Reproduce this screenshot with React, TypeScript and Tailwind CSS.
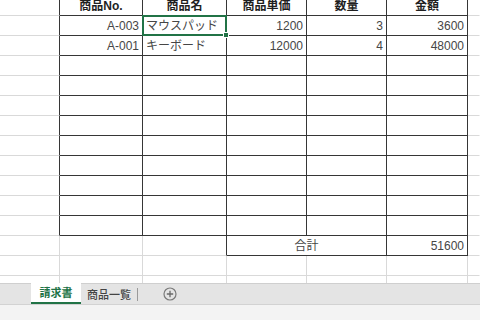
import React from "react";

type Edge = "d" | "l" | "n";

const rightEdge: Record<Edge, string> = {
  d: "border-r border-r-[#363636]",
  l: "border-r border-r-[#d9d9d9]",
  n: "border-r border-r-transparent",
};
const bottomEdge: Record<Edge, string> = {
  d: "border-b border-b-[#363636]",
  l: "border-b border-b-[#d9d9d9]",
  n: "border-b border-b-transparent",
};

type CellDef = {
  w: number;
  r: Edge;
  b: Edge;
  text?: string;
  align?: "left" | "right" | "center";
  head?: boolean;
  selected?: boolean;
};

// column widths incl. right border: row header gap, 5 table columns, right edge
const W = [60, 83, 84, 80, 80, 81, 12];

const Cell = ({ w, r, b, text, align = "left", head, selected }: CellDef) => {
  const alignCls =
    align === "right" ? "justify-end" : align === "center" ? "justify-center" : "justify-start";
  return (
    <div
      style={{ width: w }}
      className={`relative box-border h-[20px] shrink-0 flex items-center px-[3px] whitespace-nowrap ${rightEdge[r]} ${bottomEdge[b]} ${alignCls} ${
        head ? "font-bold text-[#1f1f1f]" : "text-[#464646]"
      }`}
    >
      {text}
      {selected && (
        <div className="absolute -left-px -top-px -right-px -bottom-px border-2 border-[#217346] z-10">
          <div className="absolute -right-[4px] -bottom-[4px] w-[6px] h-[6px] bg-[#217346] border border-white" />
        </div>
      )}
    </div>
  );
};

const tableRow = (cells: (Partial<CellDef> | undefined)[], bottom: Edge = "d"): CellDef[] => [
  { w: W[0], r: "d", b: "l" },
  ...[1, 2, 3, 4, 5].map((i) => ({ w: W[i], r: "d" as Edge, b: bottom, ...(cells[i - 1] || {}) })),
  { w: W[6], r: "n", b: "l" },
];

const gridRow = (): CellDef[] => W.map((w, i) => ({ w, r: (i === 6 ? "n" : "l") as Edge, b: "l" as Edge }));

const rows: CellDef[][] = [
  tableRow([
    { text: "商品No.", align: "center", head: true },
    { text: "商品名", align: "center", head: true },
    { text: "商品単価", align: "center", head: true },
    { text: "数量", align: "center", head: true },
    { text: "金額", align: "center", head: true },
  ]),
  tableRow([
    { text: "A-003", align: "right" },
    { text: "マウスパッド", selected: true },
    { text: "1200", align: "right" },
    { text: "3", align: "right" },
    { text: "3600", align: "right" },
  ]),
  tableRow([
    { text: "A-001", align: "right" },
    { text: "キーボード" },
    { text: "12000", align: "right" },
    { text: "4", align: "right" },
    { text: "48000", align: "right" },
  ]),
  ...Array.from({ length: 9 }, () => tableRow([])),
  [
    { w: W[0], r: "l", b: "l" },
    { w: W[1], r: "l", b: "l" },
    { w: W[2], r: "d", b: "l" },
    { w: W[3] + W[4], r: "d", b: "d", text: "合計", align: "center" },
    { w: W[5], r: "d", b: "d", text: "51600", align: "right" },
    { w: W[6], r: "n", b: "l" },
  ],
  gridRow(),
  gridRow(),
];

export default function App() {
  return (
    <div className="w-[480px] h-[320px] overflow-hidden flex flex-col bg-white text-[12px] font-['Liberation_Sans','Noto_Sans_CJK_JP',sans-serif]">
      {/* sheet */}
      <div className="h-[283px] shrink-0 overflow-hidden">
        <div className="-mt-[4px] flex flex-col">
          {rows.map((row, ri) => (
            <div key={ri} className="flex">
              {row.map((c, ci) => (
                <Cell key={ci} {...c} />
              ))}
            </div>
          ))}
        </div>
      </div>

      {/* sheet tabs */}
      <div className="h-[22px] shrink-0 flex items-stretch bg-[#e4e4e4] border-t border-[#cfcfcf] border-b border-b-[#d2d2d2] pl-[31px] text-[11px] font-['Noto_Sans_CJK_JP',sans-serif]">
        <div className="w-[50px] bg-white flex items-center justify-center border-b-2 border-[#217346] font-bold text-[#217346] -mt-px">
          請求書
        </div>
        <div className="w-[56px] flex items-center justify-center text-[#444444] font-medium">商品一覧</div>
        <div className="flex items-center">
          <div className="w-px h-[13px] bg-[#9a9a9a]" />
        </div>
        <div className="flex items-center ml-[25px]">
          <svg width="14" height="14" viewBox="0 0 14 14">
            <circle cx="7" cy="7" r="6" fill="none" stroke="#7a7a7a" strokeWidth="1.2" />
            <path d="M7 3.8v6.4M3.8 7h6.4" stroke="#6a6a6a" strokeWidth="1.3" />
          </svg>
        </div>
      </div>

      {/* status strip */}
      <div className="flex-1 bg-[#f3f3f3]" />
    </div>
  );
}
